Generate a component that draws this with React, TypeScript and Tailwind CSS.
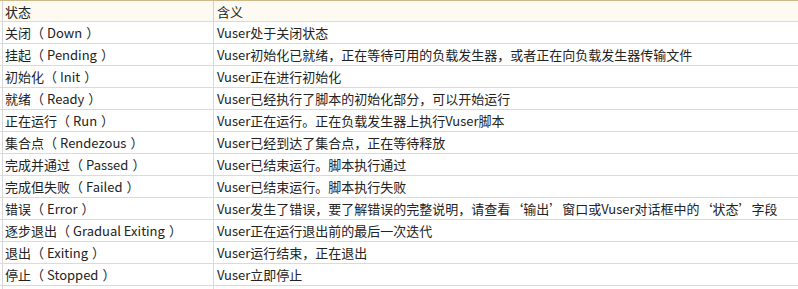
import React from 'react';

const rows: [string, string, string][] = [
  ['关闭', 'Down', 'Vuser处于关闭状态'],
  ['挂起', 'Pending', 'Vuser初始化已就绪，正在等待可用的负载发生器，或者正在向负载发生器传输文件'],
  ['初始化', 'Init', 'Vuser正在进行初始化'],
  ['就绪', 'Ready', 'Vuser已经执行了脚本的初始化部分，可以开始运行'],
  ['正在运行', 'Run', 'Vuser正在运行。正在负载发生器上执行Vuser脚本'],
  ['集合点', 'Rendezous', 'Vuser已经到达了集合点，正在等待释放'],
  ['完成并通过', 'Passed', 'Vuser已结束运行。脚本执行通过'],
  ['完成但失败', 'Failed', 'Vuser已结束运行。脚本执行失败'],
  ['错误', 'Error', 'Vuser发生了错误，要了解错误的完整说明，请查看‘输出’窗口或Vuser对话框中的‘状态’字段'],
  ['逐步退出', 'Gradual Exiting', 'Vuser正在运行退出前的最后一次迭代'],
  ['退出', 'Exiting', 'Vuser运行结束，正在退出'],
  ['停止', 'Stopped', 'Vuser立即停止'],
];

export default function App() {
  return (
    <div className="w-[798px] h-[289px] overflow-hidden bg-white text-[13px] text-[#222] [font-family:'Noto_Sans_CJK_SC','Noto_Sans',sans-serif]">
      {/* header */}
      <div className="flex h-[22px] border-t border-b border-t-[#cdb98a] border-b-[#dadada] bg-[#fdfbf1]">
        <div className="w-[3px] border-r border-[#d6d6d6]" />
        <div className="w-[211px] shrink-0 border-r border-[#dcd3b8] pl-[2px] flex items-center leading-none">状态</div>
        <div className="flex-1 pl-[3px] flex items-center leading-none">含义</div>
      </div>
      {rows.map(([cn, en, meaning]) => (
        <div key={cn} className="flex h-[22px] border-b border-[#dadada]">
          <div className="w-[3px] border-r border-[#d6d6d6]" />
          <div className="w-[211px] shrink-0 border-r border-[#dadada] pl-[2px] flex items-center leading-none whitespace-nowrap">
            <span>
              {cn}（<span className="ml-[3px]">{en}</span>
              <span className="ml-[4px]">）</span>
            </span>
          </div>
          <div className="flex-1 pl-[3px] flex items-center leading-none whitespace-nowrap">{meaning}</div>
        </div>
      ))}
      <div className="flex h-[10px]">
        <div className="w-[3px] border-r border-[#d6d6d6]" />
        <div className="w-[211px] shrink-0 border-r border-[#dadada]" />
      </div>
    </div>
  );
}
